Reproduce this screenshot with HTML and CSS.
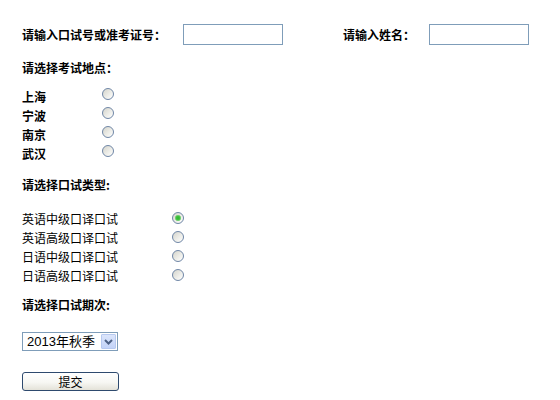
FILE: index.html
```html
<!DOCTYPE html>
<html lang="zh-CN">
<head>
<meta charset="utf-8">
<title>口试报名</title>
<link rel="stylesheet" href="styles.css">
</head>
<body>
<form class="form">
  <div class="id-row">
    <label class="label">请输入口试号或准考证号：</label>
    <input class="text-input id-input" type="text">
    <label class="label name-label">请输入姓名：</label>
    <input class="text-input name-input" type="text">
  </div>

  <div class="heading heading-place">请选择考试地点：</div>
  <div class="options places">
    <div class="option"><span class="opt-label bold">上海</span><input class="radio" type="radio" name="place"></div>
    <div class="option"><span class="opt-label bold">宁波</span><input class="radio" type="radio" name="place"></div>
    <div class="option"><span class="opt-label bold">南京</span><input class="radio" type="radio" name="place"></div>
    <div class="option"><span class="opt-label bold">武汉</span><input class="radio" type="radio" name="place"></div>
  </div>

  <div class="heading heading-type">请选择口试类型:</div>
  <div class="options types">
    <div class="option"><span class="opt-label">英语中级口译口试</span><input class="radio" type="radio" name="type" checked></div>
    <div class="option"><span class="opt-label">英语高级口译口试</span><input class="radio" type="radio" name="type"></div>
    <div class="option"><span class="opt-label">日语中级口译口试</span><input class="radio" type="radio" name="type"></div>
    <div class="option"><span class="opt-label">日语高级口译口试</span><input class="radio" type="radio" name="type"></div>
  </div>

  <div class="heading heading-term">请选择口试期次:</div>
  <div class="select-box">
    <select class="select">
      <option>2013年秋季</option>
    </select>
    <span class="select-arrow"><svg width="9" height="6" viewBox="0 0 9 6"><path d="M1 1 L4.5 4.5 L8 1" fill="none" stroke="#4d6185" stroke-width="2"/></svg></span>
  </div>

  <div class="submit-row">
    <button class="submit" type="button">提交</button>
  </div>
</form>
</body>
</html>
```

FILE: styles.css
```css
* {
  box-sizing: border-box;
}

body {
  margin: 0;
  background: #ffffff;
  color: #000000;
  font-family: "Noto Sans CJK SC", "Liberation Sans", sans-serif;
  font-size: 12px;
}

.form {
  padding: 24px 0 0 22px;
}

.id-row {
  display: flex;
  align-items: center;
  height: 21px;
}

.label {
  font-weight: bold;
  line-height: 21px;
  white-space: nowrap;
}

.text-input {
  width: 100px;
  height: 21px;
  border: 1px solid #7f9db9;
  padding: 0 2px;
  margin: 0;
  font: inherit;
  background: #ffffff;
}

.id-input {
  margin-left: 17px;
}

.name-label {
  margin-left: 60px;
}

.name-input {
  margin-left: 14px;
}

.heading {
  font-weight: bold;
  line-height: 20px;
  height: 20px;
}

.heading-place {
  margin-top: 13px;
}

.heading-type {
  margin-top: 12px;
}

.heading-term {
  margin-top: 10px;
}

.places {
  margin-top: 9px;
}

.types {
  margin-top: 14px;
}

.option {
  display: flex;
  align-items: flex-start;
  height: 19px;
  line-height: 19px;
}

.opt-label {
  white-space: nowrap;
}

.bold {
  font-weight: bold;
}

.places .opt-label {
  width: 80px;
}

.types .opt-label {
  width: 150px;
}

.radio {
  appearance: none;
  -webkit-appearance: none;
  width: 12px;
  height: 12px;
  margin: 1px 0 0 0;
  border: 1px solid #6f86a6;
  border-radius: 50%;
  background: linear-gradient(135deg, #d4d4cc 0%, #efefea 60%, #ffffff 100%);
}

.types .radio {
  margin-top: 3px;
}

.radio:checked {
  background:
    radial-gradient(circle at 50% 50%, #2fb52f 0, #44c444 2px, rgba(80, 200, 80, 0.5) 3px, transparent 3.5px),
    linear-gradient(135deg, #d4d4cc 0%, #efefea 60%, #ffffff 100%);
}

.select-box {
  display: flex;
  align-items: stretch;
  width: 96px;
  height: 19px;
  margin-top: 17px;
  border: 1px solid #7f9db9;
  background: #ffffff;
}

.select {
  appearance: none;
  -webkit-appearance: none;
  flex: 1;
  min-width: 0;
  border: 0;
  margin: 0;
  padding: 0 0 0 4px;
  background: transparent;
  font-family: "Liberation Sans", "Noto Sans CJK SC", sans-serif;
  font-size: 13px;
  line-height: 17px;
  color: #000000;
  outline: none;
}

.select-arrow {
  display: flex;
  align-items: center;
  justify-content: center;
  width: 15px;
  margin: 1px;
  border: 1px solid #b7c9f0;
  border-radius: 1px;
  background: linear-gradient(180deg, #dbe5fb 0%, #c3d3f8 100%);
}

.submit-row {
  margin-top: 21px;
}

.submit {
  width: 97px;
  height: 19px;
  margin: 0;
  padding: 0;
  border: 1px solid #2e4a6e;
  border-radius: 3px;
  background: linear-gradient(180deg, #ffffff 0%, #f7f7f3 55%, #e4e2d8 100%);
  font-family: "Noto Sans CJK SC", "Liberation Sans", sans-serif;
  font-size: 12px;
  line-height: 17px;
  color: #000000;
}
```
